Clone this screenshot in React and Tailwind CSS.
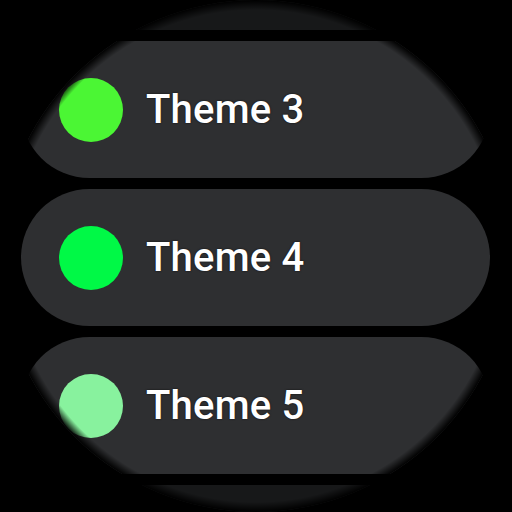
import React from "react";

const items = [
  { label: "", color: "#3ad84a", dim: true },
  { label: "Theme 3", color: "#4bf634" },
  { label: "Theme 4", color: "#00f946" },
  { label: "Theme 5", color: "#88f29e" },
  { label: "", color: "#a6f5b5", dim: true },
];

export default function App() {
  return (
    <div className="w-[512px] h-[512px] bg-black overflow-hidden">
      <div className="relative w-[512px] h-[512px] rounded-full overflow-hidden bg-black">
        <div className="flex flex-col gap-[11px] mt-[-107px] pl-[21px] pr-[22px]">
          {items.map((it, i) => (
            <div
              key={i}
              className={
                "h-[137px] shrink-0 rounded-full bg-[#2e2f31] flex items-center pl-[38px] gap-[23px]" +
                (it.dim ? " opacity-50" : "")
              }
            >
              <div
                className="w-[64px] h-[64px] rounded-full shrink-0"
                style={{ backgroundColor: it.color }}
              />
              {it.label && (
                <span
                  className="text-white text-[40px] font-medium leading-none tracking-[0.2px] [text-shadow:0_0_2px_rgba(0,0,0,0.8)]"
                  style={{ fontFamily: "Roboto, 'Noto Sans', sans-serif" }}
                >
                  {it.label}
                </span>
              )}
            </div>
          ))}
        </div>
        <div className="absolute inset-0 pointer-events-none bg-[radial-gradient(circle_256px_at_center,transparent_246px,rgba(0,0,0,0.6)_252px,#000_256px)]" />
      </div>
    </div>
  );
}
